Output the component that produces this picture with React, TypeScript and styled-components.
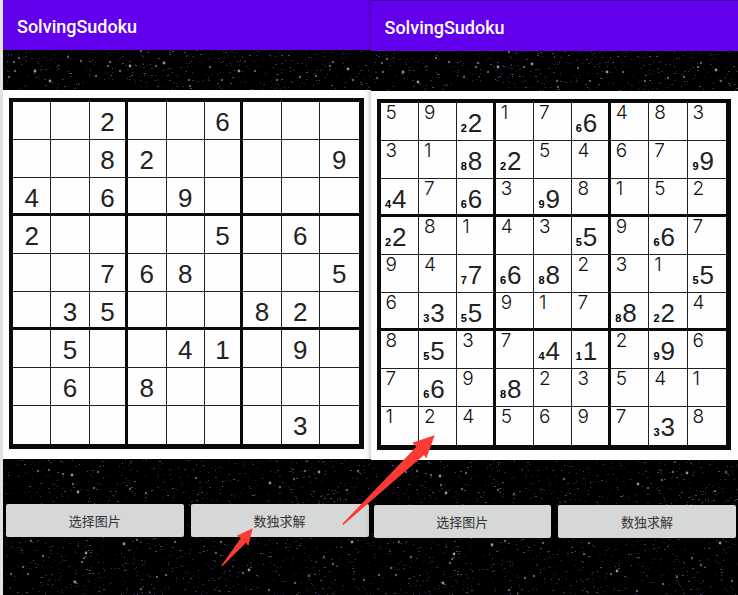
import React from "react";
import styled, { createGlobalStyle } from "styled-components";

const GlobalStyle = createGlobalStyle`
  *, *::before, *::after { box-sizing: border-box; }
  body { margin: 0; background: #000; }
`;

const Page = styled.main`
  position: relative;
  display: grid;
  grid-template-columns: 1fr 1fr;
  min-height: 100vh;
  border-left: 3px solid #e2e2e2;
  overflow: hidden;
`;

const Phone = styled.section<{ $framed?: boolean }>`
  position: relative;
  z-index: 0;
  display: flex;
  flex-direction: column;
  min-width: 0;
  background: #000;
  border-top: ${(p) => (p.$framed ? "1px solid #3a00a8" : "none")};
  box-shadow: ${(p) => (p.$framed ? "0 0 6px rgba(0, 0, 0, 0.35)" : "-1px 0 0 #000")};
`;

const Sky = styled.svg`
  position: absolute;
  inset: 0;
  z-index: -1;
  width: 100%;
  height: 100%;
`;

const AppBar = styled.header`
  display: flex;
  align-items: center;
  height: 50px;
  padding: 3px 14px 0;
  background: #6200ee;
`;

const Title = styled.h1`
  margin: 0;
  color: #fff;
  font: 500 18px/24px Roboto, sans-serif;
`;

const Photo = styled.div`
  margin-top: 40px;
  padding: 8px 7px 10px 6px;
  background: #fefefe;
`;

const Board = styled.table`
  width: 100%;
  table-layout: fixed;
  border-collapse: separate;
  border-spacing: 0;
  border: solid #0a0a0a;
  border-width: 4px 5px 5px 4px;
`;

const Cell = styled.td`
  height: 38px;
  padding: 0;
  vertical-align: top;
  border: solid #222;
  border-width: 0 1px 1px 0;

  &:nth-child(3n) {
    border-right: 3px solid #0a0a0a;
  }
  tr:nth-child(3n) > & {
    border-bottom: 3px solid #0a0a0a;
  }
  &:last-child {
    border-right: 0;
  }
  tr:last-child > & {
    border-bottom: 0;
  }
`;

const Given = styled.div<{ $marked: boolean }>`
  display: flex;
  justify-content: center;
  align-items: baseline;
  height: 35px;
  padding: 5px ${(p) => (p.$marked ? "7px" : "0")} 0 0;
  color: #222;
  font: 26px/30px "Liberation Sans", sans-serif;
`;

const Mark = styled.small`
  width: 7px;
  color: #000;
  font: bold 11px/12px "Liberation Sans", sans-serif;
`;

const Solved = styled.div`
  height: 34px;
  padding-left: 5px;
  color: #111;
  font: 300 19px/20px Inter, sans-serif;
`;

const Actions = styled.div`
  display: flex;
  gap: 7px;
  margin-top: 45px;
  padding: 0 2px 57px 3px;
`;

const ActionButton = styled.button`
  flex: 1;
  height: 33px;
  padding: 0;
  border: 0;
  border-radius: 2px;
  background: #d6d7d7;
  color: #333;
  font: 13px/20px "Noto Sans CJK SC", sans-serif;
  cursor: pointer;
`;

const Arrows = styled.svg`
  position: absolute;
  top: 0;
  left: -3px;
  z-index: 2;
  width: 738px;
  height: 595px;
  pointer-events: none;
`;

const PUZZLE = [
  "..2..6...",
  "..82....9",
  "4.6.9....",
  "2....5.6.",
  "..768...5",
  ".35...82.",
  ".5..41.9.",
  ".6.8.....",
  ".......3.",
];

const SOLUTION = [
  "592176483",
  "318254679",
  "476398152",
  "281435967",
  "947682315",
  "635917824",
  "853741296",
  "769823541",
  "124569738",
];

const BRIGHT_STARS: [number, number][] = [
  [32, 71], [11, 62], [12, 71], [16, 58], [6, 77], [47, 81], [65, 57], [78, 61],
  [105, 66], [107, 62], [127, 66], [117, 71], [93, 76], [138, 51], [153, 66],
  [161, 63], [186, 80], [187, 86], [207, 67], [219, 80], [236, 71], [252, 71],
  [274, 80], [327, 66], [330, 62], [345, 69], [297, 77], [313, 76], [350, 80],
  [95, 472], [69, 475], [60, 474], [70, 484], [46, 470], [35, 471], [75, 492],
  [91, 488], [127, 489], [143, 493], [193, 478], [316, 472], [291, 479],
  [302, 471], [344, 490], [277, 487], [267, 483], [355, 471], [28, 541],
  [40, 556], [81, 558], [83, 553], [79, 562], [20, 567], [8, 574], [25, 574],
  [72, 582], [138, 589], [154, 577], [163, 575], [172, 542], [121, 544],
  [134, 540], [218, 542], [213, 553], [240, 573], [246, 570], [292, 583],
  [306, 576], [321, 557], [330, 564], [349, 542], [361, 580], [266, 590],
];

const makeDust = (count: number) => {
  let seed = 20231;
  const next = () => {
    seed = (seed * 16807) % 2147483647;
    return seed / 2147483647;
  };
  const tones = ["#16163a", "#1c1c40", "#28283e", "#363644", "#4c4c58"];
  return Array.from({ length: count }, () => {
    const x = Math.round(next() * 420);
    const band = next();
    const y = band < 0.23 ? 50 + next() * 40 : 459 + next() * 136;
    return { x, y: Math.round(y), size: next() < 0.65 ? 1 : 2, tone: tones[Math.floor(next() * 5)] };
  });
};

const DUST = makeDust(1900);

function StarrySky() {
  return (
    <Sky aria-hidden="true">
      {DUST.map((d, i) => (
        <rect key={i} x={d.x} y={d.y} width={d.size} height={1} fill={d.tone} />
      ))}
      {BRIGHT_STARS.map(([x, y], i) => (
        <circle key={i} cx={x} cy={y} r={i % 5 === 0 ? 1.4 : 1.2} fill={i % 5 === 0 ? "#92929c" : "#60606a"} />
      ))}
    </Sky>
  );
}

function SudokuBoard({ solved }: { solved: boolean }) {
  return (
    <Board aria-label={solved ? "Solved sudoku" : "Sudoku"}>
      <tbody>
        {PUZZLE.map((row, r) => (
          <tr key={r}>
            {row.split("").map((digit, c) => (
              <Cell key={c}>
                {digit !== "." ? (
                  <Given $marked={solved}>
                    {solved && <Mark>{digit}</Mark>}
                    {digit}
                  </Given>
                ) : (
                  solved && <Solved>{SOLUTION[r][c]}</Solved>
                )}
              </Cell>
            ))}
          </tr>
        ))}
      </tbody>
    </Board>
  );
}

function PhoneScreen({ solved = false }: { solved?: boolean }) {
  return (
    <Phone $framed={solved}>
      <StarrySky />
      <AppBar>
        <Title>SolvingSudoku</Title>
      </AppBar>
      <Photo>
        <SudokuBoard solved={solved} />
      </Photo>
      <Actions>
        <ActionButton type="button">选择图片</ActionButton>
        <ActionButton type="button">数独求解</ActionButton>
      </Actions>
    </Phone>
  );
}

export default function App() {
  return (
    <>
      <GlobalStyle />
      <Page lang="zh-CN">
        <PhoneScreen />
        <PhoneScreen solved />
        <Arrows viewBox="0 0 738 595" fill="#fb3a36" aria-hidden="true">
          <path d="M252.7 528.3 236.7 535.7 240.7 538.3 221.3 565.5 222.3 566.3 246 542.7 248.3 546.2Z" />
          <path d="M434.7 435.3 412.3 442.7 416.3 446.7 342.2 524 343.3 525 424 455 426.3 458.4Z" />
        </Arrows>
      </Page>
    </>
  );
}
